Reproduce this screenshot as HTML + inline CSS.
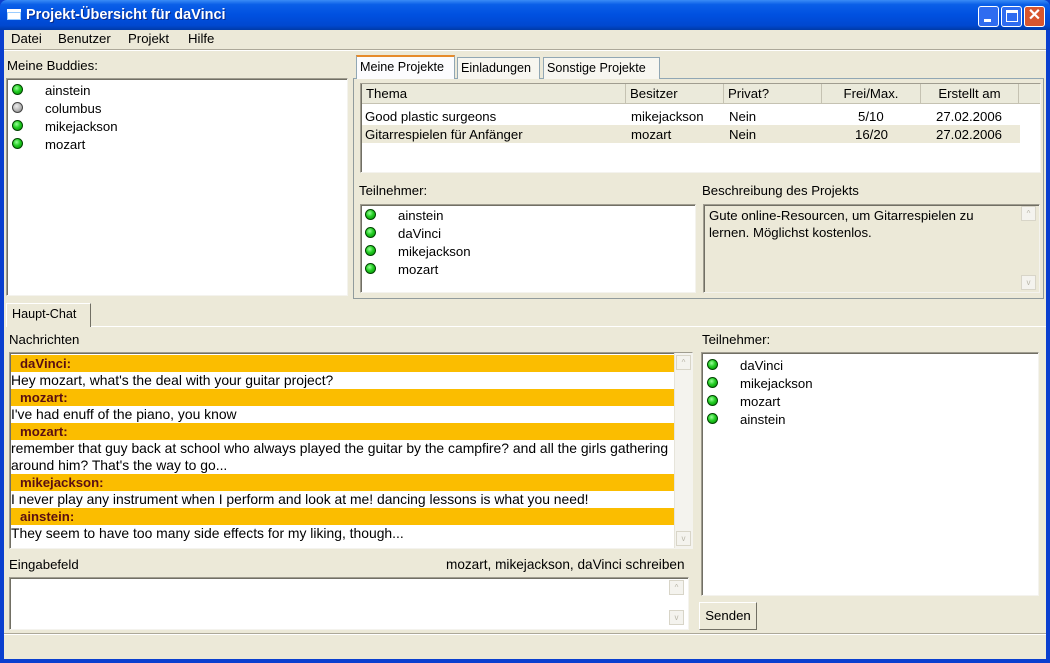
<!DOCTYPE html>
<html><head><meta charset="utf-8"><style>
*{margin:0;padding:0;box-sizing:border-box}
body{width:1050px;height:663px;overflow:hidden;background:#0a3fcf;font-family:"Liberation Sans",sans-serif;font-size:13.2px;color:#000;position:relative}
.a{position:absolute;white-space:nowrap}
.win{position:absolute;left:4px;top:30px;width:1042px;height:629px;background:#ece9d8}
.title{position:absolute;left:0;top:0;width:1050px;height:30px;background:linear-gradient(#3a8cf6 0%,#0a5fe8 15%,#0050e0 50%,#0048d0 85%,#003aa8 100%);border-radius:7px 7px 0 0}
.sunk{position:absolute;background:#fff;border:1px solid #a09d90;border-right-color:#f4f3ee;border-bottom-color:#f4f3ee;box-shadow:inset 1px 1px 0 #716f64}
.dot{position:absolute;width:11px;height:11px;border-radius:50%;background:radial-gradient(circle at 40% 35%,#9f9 0,#2c2 45%,#080 100%);border:1px solid #040}
.gray{background:radial-gradient(circle at 40% 35%,#eee 0,#bbb 50%,#777 100%);border-color:#444}
.sb{position:absolute;background:#f4f3ee;border-left:1px solid #e6e4da}
.sbb{position:absolute;width:15px;height:15px;border:1px solid #d8d5c8;background:#f4f3ee;color:#b8b5a8;font-size:8px;text-align:center;line-height:13px}
.hdr{position:absolute;top:0;height:20px;border-right:1px solid #c5c2b2;border-bottom:1px solid #c5c2b2;background:#ebeadb;line-height:20px;padding-left:4px}
.msgh{position:absolute;left:1px;width:663px;height:17px;background:#fbbd00;color:#5a0f12;font-weight:bold;padding-left:9px;line-height:17px;font-size:13.2px}
.msg{position:absolute;left:1px;line-height:17px;font-size:13.9px}
.tab{position:absolute;height:22px;border:1px solid #91a7b4;border-bottom:none;background:#f7f6f0;line-height:20px;padding:0 3px;font-size:12.6px;white-space:nowrap;overflow:hidden}
</style></head><body>
<div class="title"></div>
<div class="a" style="left:7px;top:9px;width:14px;height:11px;background:#fff;border-top:3px solid #fff;box-shadow:inset 0 0 0 1px #9cf"></div>
<div class="a" style="left:26px;top:7px;color:#fff;font-weight:bold;font-size:14.5px;text-shadow:1px 1px 0 #0a2a8a">Projekt-Übersicht für daVinci</div>
<div class="a" style="left:978px;top:6px;width:21px;height:21px;border:1px solid #fff;border-radius:3px;background:#2f6cf0"><div class="a" style="left:5px;top:12px;width:7px;height:3px;background:#fff"></div></div>
<div class="a" style="left:1001px;top:6px;width:21px;height:21px;border:1px solid #fff;border-radius:3px;background:#2f6cf0"><div class="a" style="left:4px;top:3px;width:12px;height:12px;border:1px solid #fff;border-top-width:3px"></div></div>
<div class="a" style="left:1024px;top:6px;width:21px;height:21px;border:1px solid #fff;border-radius:3px;background:#d8552e;color:#fff;font-weight:bold;font-size:16px;text-align:center;line-height:18px">✕</div>
<div class="win"></div>
<div class="a" style="left:11px;top:31px">Datei</div>
<div class="a" style="left:58px;top:31px">Benutzer</div>
<div class="a" style="left:128px;top:31px">Projekt</div>
<div class="a" style="left:188px;top:31px">Hilfe</div>
<div class="a" style="left:4px;top:49px;width:1042px;height:2px;border-top:1px solid #aca899;border-bottom:1px solid #fff"></div>

<div class="a" style="left:7px;top:58px">Meine Buddies:</div>
<div class="sunk" style="left:6px;top:78px;width:342px;height:218px"></div>
<div class="dot" style="left:12px;top:84px"></div><div class="a" style="left:45px;top:83px">ainstein</div>
<div class="dot gray" style="left:12px;top:102px"></div><div class="a" style="left:45px;top:101px">columbus</div>
<div class="dot" style="left:12px;top:120px"></div><div class="a" style="left:45px;top:119px">mikejackson</div>
<div class="dot" style="left:12px;top:138px"></div><div class="a" style="left:45px;top:137px">mozart</div>

<div class="a" style="left:353px;top:78px;width:691px;height:221px;border:1px solid #919b9c;border-top-color:#91a7b4;background:#ece9d8"></div>
<div class="tab" style="left:356px;top:55px;width:99px;height:24px;background:#fcfcfe;border-top:2px solid #e68b2c">Meine Projekte</div>
<div class="tab" style="left:457px;top:57px;width:83px">Einladungen</div>
<div class="tab" style="left:543px;top:57px;width:117px">Sonstige Projekte</div>
<div class="sunk" style="left:360px;top:83px;width:681px;height:90px;overflow:hidden">
 <div class="hdr" style="left:1px;width:264px">Thema</div>
 <div class="hdr" style="left:265px;width:98px">Besitzer</div>
 <div class="hdr" style="left:363px;width:98px">Privat?</div>
 <div class="hdr" style="left:461px;width:99px;text-align:center;padding:0">Frei/Max.</div>
 <div class="hdr" style="left:560px;width:98px;text-align:center;padding:0">Erstellt am</div>
 <div class="hdr" style="left:658px;width:22px"></div>
 <div class="a" style="left:1px;top:41px;width:658px;height:18px;background:#ece9d8"></div>
 <div class="a" style="left:4px;top:25px">Good plastic surgeons</div>
 <div class="a" style="left:270px;top:25px">mikejackson</div>
 <div class="a" style="left:368px;top:25px">Nein</div>
 <div class="a" style="left:497px;top:25px">5/10</div>
 <div class="a" style="left:575px;top:25px">27.02.2006</div>
 <div class="a" style="left:4px;top:43px">Gitarrespielen für Anfänger</div>
 <div class="a" style="left:270px;top:43px">mozart</div>
 <div class="a" style="left:368px;top:43px">Nein</div>
 <div class="a" style="left:494px;top:43px">16/20</div>
 <div class="a" style="left:575px;top:43px">27.02.2006</div>
</div>
<div class="a" style="left:359px;top:183px">Teilnehmer:</div>
<div class="sunk" style="left:360px;top:204px;width:336px;height:89px"></div>
<div class="dot" style="left:365px;top:209px"></div><div class="a" style="left:398px;top:208px">ainstein</div>
<div class="dot" style="left:365px;top:227px"></div><div class="a" style="left:398px;top:226px">daVinci</div>
<div class="dot" style="left:365px;top:245px"></div><div class="a" style="left:398px;top:244px">mikejackson</div>
<div class="dot" style="left:365px;top:263px"></div><div class="a" style="left:398px;top:262px">mozart</div>
<div class="a" style="left:702px;top:183px">Beschreibung des Projekts</div>
<div class="sunk" style="left:703px;top:204px;width:337px;height:89px;background:#ece9d8"></div>
<div class="a" style="left:709px;top:207px;line-height:17px;white-space:normal;width:285px">Gute online-Resourcen, um Gitarrespielen zu lernen. Möglichst kostenlos.</div>
<div class="sbb" style="left:1021px;top:206px">^</div>
<div class="sbb" style="left:1021px;top:275px">v</div>

<div class="a" style="left:6px;top:326px;width:1040px;height:1px;background:#fff"></div>
<div class="tab" style="left:6px;top:303px;width:85px;height:24px;background:#ece9d8;border-color:#fff #716f64 transparent #fff;padding:0 5px">Haupt-Chat</div>
<div class="a" style="left:9px;top:332px">Nachrichten</div>
<div class="sunk" style="left:9px;top:352px;width:684px;height:197px;overflow:hidden">
 <div class="msgh" style="top:2px">daVinci:</div>
 <div class="msg" style="top:19px">Hey mozart, what's the deal with your guitar project?</div>
 <div class="msgh" style="top:36px">mozart:</div>
 <div class="msg" style="top:53px">I've had enuff of the piano, you know</div>
 <div class="msgh" style="top:70px">mozart:</div>
 <div class="msg" style="top:87px">remember that guy back at school who always played the guitar by the campfire? and all the girls gathering</div>
 <div class="msg" style="top:104px">around him? That's the way to go...</div>
 <div class="msgh" style="top:121px">mikejackson:</div>
 <div class="msg" style="top:138px">I never play any instrument when I perform and look at me! dancing lessons is what you need!</div>
 <div class="msgh" style="top:155px">ainstein:</div>
 <div class="msg" style="top:172px">They seem to have too many side effects for my liking, though...</div>
 <div class="sb" style="left:664px;top:0;width:18px;height:197px"></div>
 <div class="sbb" style="left:666px;top:2px">^</div>
 <div class="sbb" style="left:666px;top:178px">v</div>
</div>
<div class="a" style="left:9px;top:557px">Eingabefeld</div>
<div class="a" style="left:446px;top:557px;font-size:13.6px">mozart, mikejackson, daVinci schreiben</div>
<div class="sunk" style="left:9px;top:577px;width:680px;height:53px"></div>
<div class="sbb" style="left:669px;top:580px">^</div>
<div class="sbb" style="left:669px;top:610px">v</div>

<div class="a" style="left:702px;top:332px">Teilnehmer:</div>
<div class="sunk" style="left:701px;top:352px;width:338px;height:244px"></div>
<div class="dot" style="left:707px;top:359px"></div><div class="a" style="left:740px;top:358px">daVinci</div>
<div class="dot" style="left:707px;top:377px"></div><div class="a" style="left:740px;top:376px">mikejackson</div>
<div class="dot" style="left:707px;top:395px"></div><div class="a" style="left:740px;top:394px">mozart</div>
<div class="dot" style="left:707px;top:413px"></div><div class="a" style="left:740px;top:412px">ainstein</div>
<div class="a" style="left:699px;top:602px;width:58px;height:28px;border:1px solid #fff;border-right-color:#716f64;border-bottom-color:#716f64;text-align:center;line-height:26px">Senden</div>

<div class="a" style="left:4px;top:633px;width:1042px;height:1px;background:#aca899"></div>
<div class="a" style="left:4px;top:634px;width:1042px;height:1px;background:#fff"></div>
</body></html>
